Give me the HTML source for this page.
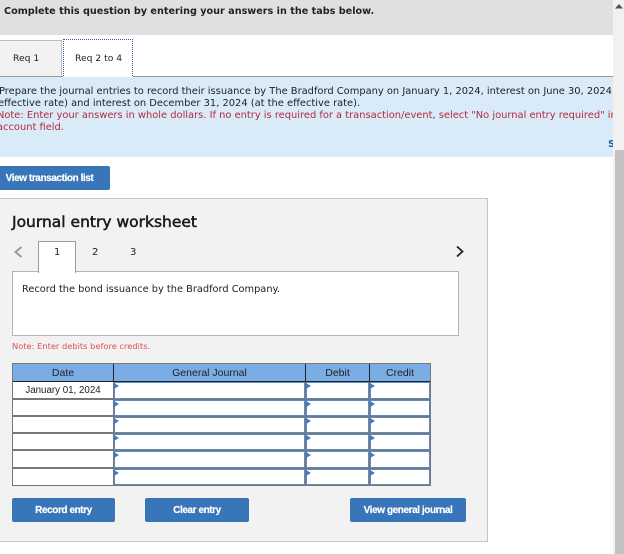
<!DOCTYPE html>
<html><head><meta charset="utf-8">
<style>
html,body{margin:0;padding:0;background:#fff}
body{width:624px;height:554px;overflow:hidden;position:relative;font-family:"DejaVu Sans","Liberation Sans",sans-serif;color:#222}
.a{position:absolute;white-space:nowrap}
.btn{position:absolute;background:#3875b9;border-radius:2px;color:#fff;font:bold 10px/25px "Liberation Sans",sans-serif;letter-spacing:-.42px;text-align:center;height:24px;-webkit-text-stroke:.2px #fff}
.t{font-size:9.9px;line-height:12px}
.r{color:#b5293a}
.c{position:absolute;background:#fff;outline:1px solid #5e8ac0;}
.c:before{content:"";position:absolute;left:-1px;top:0;border-left:5px solid #3f7cc4;border-top:3px solid transparent;border-bottom:3px solid transparent}
.d{position:absolute;left:13px;width:100px;background:#fff;font:9.75px/18px "Liberation Sans",sans-serif;text-align:center;color:#222}
.h{position:absolute;top:364px;height:17px;background:#7aade6;font:10.5px/18px "Liberation Sans",sans-serif;text-align:center;color:#222}
</style></head><body>
<div class="a" style="left:0;top:0;width:613px;height:35px;background:#e0e0e0"></div>
<div class="a" style="left:4px;top:6px;font-size:9.67px;font-weight:bold;line-height:12px;color:#222">Complete this question by entering your answers in the tabs below.</div>

<div class="a" style="left:-2px;top:40px;width:62px;height:36px;background:#f2f2f2;border:1px solid #bbb;border-bottom:0"></div>
<div class="a" style="left:13px;top:53px;font-size:9.2px;line-height:12px">Req 1</div>
<div class="a" style="left:0;top:76px;width:613px;height:1px;background:#999"></div>
<div class="a" style="left:63px;top:39px;width:68px;height:38px;background:#fff;border:1px dotted #2a5f9e;border-bottom:0"></div>
<div class="a" style="left:75px;top:53px;font-size:9.2px;line-height:12px">Req 2 to 4</div>

<div class="a" style="left:0;top:77px;width:613px;height:80px;background:#d9ebf9"></div>
<div class="a t" style="left:-1px;top:86px;width:613px;overflow:hidden">Prepare the journal entries to record their issuance by The Bradford Company on January 1, 2024, interest on June 30, 2024</div>
<div class="a t" style="left:-2px;top:98px">effective rate) and interest on December 31, 2024 (at the effective rate).</div>
<div class="a t r" style="left:-3px;top:110px;width:616px;overflow:hidden">Note: Enter your answers in whole dollars. If no entry is required for a transaction/event, select "No journal entry required" in</div>
<div class="a t r" style="left:-3px;top:122px">account field.</div>
<div class="a" style="left:608px;top:139px;width:5px;overflow:hidden;font-size:10px;font-weight:bold;line-height:12px;color:#2a5f9e">S</div>

<div class="btn" style="left:-10px;top:166px;width:120px;text-indent:-1px">View transaction list</div>

<div class="a" style="left:0;top:198px;width:487px;height:342px;background:#f2f2f2;border-top:1px solid #c4c4c4;border-right:1px solid #c4c4c4;border-bottom:1px solid #c4c4c4"></div>
<div class="a" style="left:12px;top:213px;font-size:15.5px;line-height:18px;color:#1a1a1a;-webkit-text-stroke:.5px #1a1a1a">Journal entry worksheet</div>

<svg class="a" style="left:12px;top:244px" width="12" height="16"><path d="M9.5 3 L3.5 8 L9.5 13" fill="none" stroke="#9a9a9a" stroke-width="2"/></svg>
<svg class="a" style="left:454px;top:244px" width="12" height="16"><path d="M3 2.5 L8.5 7.5 L3 12.5" fill="none" stroke="#222" stroke-width="1.8"/></svg>

<div class="a" style="left:12px;top:271px;width:445px;height:63px;background:#fff;border:1px solid #b5b5b5"></div>
<div class="a" style="left:38px;top:241px;width:36px;height:31px;background:#fff;border:1px solid #999;border-bottom:0"></div>
<div class="a" style="left:54px;top:247px;font-size:10px;line-height:12px">1</div>
<div class="a" style="left:92px;top:247px;font-size:10px;line-height:12px">2</div>
<div class="a" style="left:130px;top:247px;font-size:10px;line-height:12px">3</div>
<div class="a" style="left:22px;top:284px;font-size:9.8px;line-height:12px">Record the bond issuance by the Bradford Company.</div>
<div class="a" style="left:12px;top:340px;font-size:8.3px;line-height:12px;color:#d9534f">Note: Enter debits before credits.</div>

<div class="a" style="left:12px;top:363px;width:419px;height:123px;background:#777"></div>
<div class="a" style="left:13px;top:381px;width:417px;height:1px;background:#222"></div>
<div class="a" style="left:113px;top:364px;width:1px;height:18px;background:#222"></div>
<div class="a" style="left:305px;top:364px;width:1px;height:18px;background:#222"></div>
<div class="a" style="left:369px;top:364px;width:1px;height:18px;background:#222"></div>
<div class="h" style="left:13px;width:100px">Date</div>
<div class="h" style="left:114px;width:191px">General Journal</div>
<div class="h" style="left:306px;width:63px">Debit</div>
<div class="h" style="left:370px;width:60px">Credit</div>

<div class="d" style="top:382px;height:16px">January 01, 2024</div>
<div class="d" style="top:400px;height:15px"></div>
<div class="d" style="top:417px;height:15px"></div>
<div class="d" style="top:434px;height:15px"></div>
<div class="d" style="top:451px;height:16px"></div>
<div class="d" style="top:469px;height:16px"></div>

<div class="c" style="left:115px;top:383px;width:189px;height:15px"></div>
<div class="c" style="left:307px;top:383px;width:61px;height:15px"></div>
<div class="c" style="left:371px;top:383px;width:58px;height:15px"></div>
<div class="c" style="left:115px;top:401px;width:189px;height:14px"></div>
<div class="c" style="left:307px;top:401px;width:61px;height:14px"></div>
<div class="c" style="left:371px;top:401px;width:58px;height:14px"></div>
<div class="c" style="left:115px;top:418px;width:189px;height:14px"></div>
<div class="c" style="left:307px;top:418px;width:61px;height:14px"></div>
<div class="c" style="left:371px;top:418px;width:58px;height:14px"></div>
<div class="c" style="left:115px;top:435px;width:189px;height:14px"></div>
<div class="c" style="left:307px;top:435px;width:61px;height:14px"></div>
<div class="c" style="left:371px;top:435px;width:58px;height:14px"></div>
<div class="c" style="left:115px;top:452px;width:189px;height:15px"></div>
<div class="c" style="left:307px;top:452px;width:61px;height:15px"></div>
<div class="c" style="left:371px;top:452px;width:58px;height:15px"></div>
<div class="c" style="left:115px;top:470px;width:189px;height:14px"></div>
<div class="c" style="left:307px;top:470px;width:61px;height:14px"></div>
<div class="c" style="left:371px;top:470px;width:58px;height:14px"></div>

<div class="btn" style="left:12px;top:498px;width:103px">Record entry</div>
<div class="btn" style="left:145px;top:498px;width:104px">Clear entry</div>
<div class="btn" style="left:350px;top:498px;width:116px">View general journal</div>

<div class="a" style="left:613px;top:0;width:11px;height:554px;background:#f1f1f1"></div>
<div class="a" style="left:615px;top:150px;width:9px;height:404px;background:#c1c1c1"></div>
<svg class="a" style="left:614px;top:2px" width="10" height="8"><path d="M1 6.5 L5 2 L9 6.5 Z" fill="#505050"/></svg>
</body></html>
